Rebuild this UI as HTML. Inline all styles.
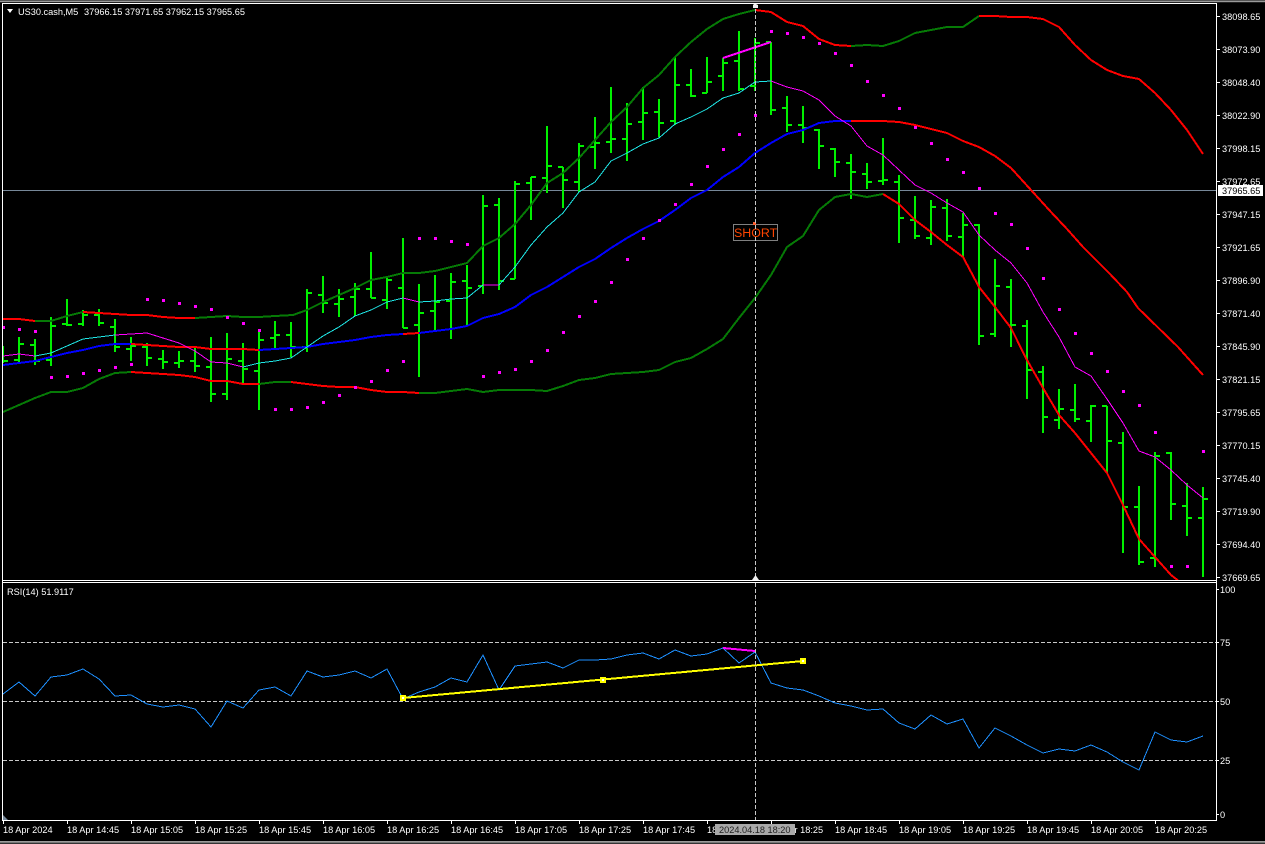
<!DOCTYPE html>
<html lang="en"><head><meta charset="utf-8"><title>US30.cash,M5</title>
<style>
html,body{margin:0;padding:0;background:#000;width:1265px;height:844px;overflow:hidden}
svg{display:block}
text{font-family:"Liberation Sans",sans-serif;font-size:9.2px;fill:#fff}
.l{fill:none;stroke-width:2;shape-rendering:crispEdges;stroke-linejoin:round}
.t{fill:none;stroke-width:1;shape-rendering:crispEdges}
.g{stroke:#067a06}.r{stroke:#f00}.b{stroke:#00f}.c{stroke:#1fe6e6}.m{stroke:#f0f}
.c1{shape-rendering:crispEdges}
</style></head><body>
<svg width="1265" height="844" viewBox="0 0 1265 844" xmlns="http://www.w3.org/2000/svg">
<rect width="1265" height="844" fill="#000"/>
<g class="c1">
<rect x="0" y="0" width="1265" height="1" fill="#555"/>
<rect x="0" y="1" width="1265" height="1" fill="#9a9a9a"/>
<rect x="0" y="2" width="1265" height="1" fill="#222"/>
<rect x="0" y="841" width="1265" height="1" fill="#9a9a9a"/>
<rect x="0" y="842" width="1265" height="1" fill="#777"/>
<rect x="0" y="843" width="1265" height="1" fill="#333"/>
</g>

<clipPath id="mc"><rect x="3" y="4" width="1213" height="576"/></clipPath>
<g clip-path="url(#mc)">
<line x1="3" y1="190.5" x2="1216" y2="190.5" stroke="#778899" class="c1"/>
<path fill="none" stroke="#00f000" stroke-width="2" class="c1" d="
M3 346V363M3 361H8
M19 337V362M14 360H19M19 344H24
M35 339V365M30 345H35M35 361H40
M51 317V366M46 360H51M51 326H56
M67 299V326M62 324H67M67 325H72
M83 310V326M78 324H83M83 315H88
M99 309V326M94 315H99M99 323H104
M115 319V352M110 327H115M115 347H120
M131 337V361M126 349H131M131 346H136
M147 343V366M142 347H147M147 358H152
M163 350V369M158 359H163M163 362H168
M179 351V368M174 363H179M179 361H184
M195 348V372M190 361H195M195 366H200
M211 337V402M206 367H211M211 394H216
M227 333V400M222 394H227M227 359H232
M243 343V383M238 361H243M243 369H248
M259 332V410M254 371H259M259 340H264
M275 321V349M270 338H275M275 335H280
M291 322V357M286 335H291M291 347H296
M307 289V352M302 347H307M307 293H312
M323 276V313M318 295H323M323 303H328
M339 289V317M334 304H339M339 299H344
M355 283V316M350 297H355M355 289H360
M371 252V298M366 289H371M371 298H376
M387 278V309M382 300H387M387 280H392
M403 238V328M398 288H403M403 328H408
M419 284V377M414 325H419M419 313H424
M435 275V331M430 311H435M435 302H440
M451 273V339M446 301H451M451 282H456
M467 265V325M462 281H467M467 288H472
M483 195V294M478 286H483M483 206H488
M499 198V290M494 205H499M499 281H504
M515 181V279M510 279H515M515 184H520
M531 177V220M526 183H531M531 177H536
M547 126V193M542 178H547M547 166H552
M563 167V208M558 167H563M563 180H568
M579 143V192M574 182H579M579 146H584
M595 117V169M590 147H595M595 143H600
M611 87V153M606 142H611M611 139H616
M627 103V161M622 139H627M627 124H632
M643 87V140M638 122H643M643 113H648
M659 99V137M654 112H659M659 123H664
M675 57V125M670 121H675M675 85H680
M691 69V97M686 85H691M691 96H696
M707 57V93M702 93H707M707 82H712
M723 58V91M718 76H723M723 63H728
M739 31V91M734 61H739M739 89H744
M755 38V91M750 86H755M755 43H760
M771 42V115M766 42H771M771 110H776
M787 96V132M782 108H787M787 125H792
M803 106V143M798 125H803M803 128H808
M819 129V169M814 130H819M819 146H824
M835 148V177M830 149H835M835 162H840
M851 154V199M846 163H851M851 172H856
M867 163V189M862 174H867M867 182H872
M883 138V185M878 181H883M883 180H888
M899 175V243M894 182H899M899 218H904
M915 196V239M910 220H915M915 236H920
M931 200V245M926 238H931M931 207H936
M947 199V241M942 208H947M947 236H952
M963 213V257M958 237H963M963 225H968
M979 224V345M974 225H979M979 336H984
M995 259V337M990 334H995M995 286H1000
M1011 279V347M1006 287H1011M1011 325H1016
M1027 320V399M1022 326H1027M1027 370H1032
M1043 366V433M1038 372H1043M1043 417H1048
M1059 389V429M1054 420H1059M1059 409H1064
M1075 384V422M1070 410H1075M1075 419H1080
M1091 405V442M1086 421H1091M1091 406H1096
M1107 406V473M1102 406H1107M1107 441H1112
M1123 432V553M1118 443H1123M1123 507H1128
M1139 486V565M1134 507H1139M1139 562H1144
M1155 452V567M1150 558H1155M1155 456H1160
M1171 452V520M1166 453H1171M1171 504H1176
M1187 483V536M1182 506H1187M1187 518H1192
M1203 487V577M1198 518H1203M1203 499H1208"/>

<polyline class="l r" points="3,319 19,319 35,321"/>
<polyline class="l g" points="35,321 51,321 67,316 83,312"/>
<polyline class="l r" points="83,312 99,313 115,314 131,315 147,315 163,317 179,318 195,318"/>
<polyline class="l g" points="195,318 211,317 227,316 243,317 259,317 275,316 293,315 307,310 323,302 339,295 355,288 371,280 387,277 403,273 419,273 435,271 451,267 467,263 483,246 499,238 515,224 531,205 547,183 563,173 579,158 595,140 611,122 627,107 643,88 659,75 675,57 691,42 707,29 723,19 739,14 755,10"/>
<polyline class="l r" points="755,10 771,12 787,22 803,26 819,39 835,45 851,46"/>
<polyline class="l g" points="851,46 867,45 883,46 899,41 915,33 931,30 947,27 963,27 979,16"/>
<polyline class="l r" points="979,16 995,16 1011,17 1027,17 1043,19 1059,27 1075,45 1091,60 1107,70 1123,76 1139,79 1155,93 1171,110 1187,130 1203,154"/>

<polyline class="l g" points="3,412 19,405 35,398 51,392 67,392 83,388 99,379 115,373 131,372"/>
<polyline class="l r" points="131,372 147,373 163,374 179,375 195,377 211,381 227,381 243,384 259,384"/>
<polyline class="l g" points="259,384 275,382 291,382"/>
<polyline class="l r" points="291,382 307,384 323,386 339,387 355,387 371,390 387,392 403,392 419,393"/>
<polyline class="l g" points="419,393 435,393 451,391 467,389 483,392 499,390 515,390 531,390 547,391 563,386 579,380 595,378 611,374 627,373 643,372 659,370 675,362 691,358 707,349 723,339 739,318 755,298 771,275 787,247 803,236 819,210 835,197 851,194 867,197 883,194"/>
<polyline class="l r" points="883,194 899,204 915,220 931,232 947,245 963,257 979,287 995,307 1011,328 1027,360 1043,388 1059,415 1075,433 1091,453 1107,473 1123,505 1139,539 1155,557 1171,575 1180,582"/>

<polyline class="l b" points="3,365 19,363 35,361 51,357 67,353 83,350 99,346 115,344 131,344"/>
<polyline class="l r" points="131,344 147,345 163,346 179,347 195,347 211,349 227,349 243,349 259,350"/>
<polyline class="l b" points="259,350 275,349 291,348 307,347 323,344 339,342 355,340 371,337 387,335 403,334"/>
<polyline class="l r" points="403,334 419,333"/>
<polyline class="l b" points="419,333 435,331 451,329 467,326 483,318 499,314 515,307 531,295 547,287 563,277 579,267 595,259 611,248 627,238 643,229 659,221 675,210 691,198 707,190 723,177 739,167 755,153 771,143 787,134 803,130 819,123 835,121 851,121"/>
<polyline class="l r" points="851,121 867,121 883,121 899,122 915,125 931,129 947,133 963,141 979,147 995,156 1011,168 1031,190 1051,212 1067,229 1083,247 1110,274 1127,292 1138,308 1178,347 1203,375"/>

<polyline class="t m" points="3,356 19,354 35,356"/>
<polyline class="t c" points="35,356 51,353 67,346 83,339 99,337 115,335"/>
<polyline class="t m" points="115,335 131,334 147,333 163,338 179,343 195,351 211,362 227,363 243,367"/>
<polyline class="t c" points="243,367 259,363 275,361 291,358 307,347 323,336 339,327 355,316 371,310 387,302 403,298"/>
<polyline class="t m" points="403,298 419,302"/>
<polyline class="t c" points="419,302 435,301 451,299 467,298 483,285"/>
<polyline class="t m" points="483,285 499,285"/>
<polyline class="t c" points="499,285 515,267 531,245 547,227 563,213 579,192 595,182 611,161 627,153 643,144 659,138 675,124 691,117 707,109 723,98 739,93 755,82 771,81"/>
<polyline class="t m" points="771,81 787,87 803,91 819,100 835,116 851,126 867,146 883,155 899,170 915,185 931,193 947,203 963,212 979,235 995,250 1011,263 1027,283 1043,312 1059,337 1075,367 1091,376 1107,399 1123,423 1139,451 1155,457 1171,470 1187,485 1203,498"/>

<line x1="723" y1="58" x2="771" y2="42" stroke="#f0f" stroke-width="2" class="c1"/>

<path fill="#f0f" class="c1" d="M2 326h3v3h-3zM18 328h3v3h-3zM34 330h3v3h-3zM50 376h3v3h-3zM66 375h3v3h-3zM82 372h3v3h-3zM98 369h3v3h-3zM114 366h3v3h-3zM130 363h3v3h-3zM146 298h3v3h-3zM162 299h3v3h-3zM178 302h3v3h-3zM194 305h3v3h-3zM210 308h3v3h-3zM226 316h3v3h-3zM242 322h3v3h-3zM258 329h3v3h-3zM274 408h3v3h-3zM290 408h3v3h-3zM306 406h3v3h-3zM322 401h3v3h-3zM338 394h3v3h-3zM354 386h3v3h-3zM370 380h3v3h-3zM386 369h3v3h-3zM402 360h3v3h-3zM418 237h3v3h-3zM434 237h3v3h-3zM450 240h3v3h-3zM466 243h3v3h-3zM482 375h3v3h-3zM498 371h3v3h-3zM514 368h3v3h-3zM530 360h3v3h-3zM546 349h3v3h-3zM562 331h3v3h-3zM578 315h3v3h-3zM594 300h3v3h-3zM610 281h3v3h-3zM626 258h3v3h-3zM642 237h3v3h-3zM658 219h3v3h-3zM674 203h3v3h-3zM690 183h3v3h-3zM706 165h3v3h-3zM722 148h3v3h-3zM738 133h3v3h-3zM754 114h3v3h-3zM770 30h3v3h-3zM786 32h3v3h-3zM802 36h3v3h-3zM818 42h3v3h-3zM834 52h3v3h-3zM850 64h3v3h-3zM866 80h3v3h-3zM882 94h3v3h-3zM898 107h3v3h-3zM914 126h3v3h-3zM930 142h3v3h-3zM946 158h3v3h-3zM962 171h3v3h-3zM978 187h3v3h-3zM994 212h3v3h-3zM1010 223h3v3h-3zM1026 247h3v3h-3zM1042 277h3v3h-3zM1058 308h3v3h-3zM1074 332h3v3h-3zM1090 352h3v3h-3zM1106 370h3v3h-3zM1122 390h3v3h-3zM1138 404h3v3h-3zM1154 431h3v3h-3zM1170 565h3v3h-3zM1186 565h3v3h-3zM1202 450h3v3h-3z"/>

<rect x="733.5" y="224.5" width="44" height="16" fill="none" stroke="#808080" class="c1"/>
<text x="734" y="237" style="font-size:12.4px;fill:#ff4500">SHORT</text>
<rect x="753" y="222" width="3" height="3" fill="#ff6030" class="c1"/>
</g>

<text x="18" y="15">US30.cash,M5</text>
<text x="84" y="15">37966.15 37971.65 37962.15 37965.65</text>
<polygon points="7,9 13,9 10,13" fill="#fff"/>

<clipPath id="sc"><rect x="3" y="583" width="1213" height="237"/></clipPath>
<g clip-path="url(#sc)">
<g stroke="#c8c8c8" stroke-dasharray="4 2" class="c1">
<line x1="3" y1="642.5" x2="1216" y2="642.5"/>
<line x1="3" y1="701.5" x2="1216" y2="701.5"/>
<line x1="3" y1="760.5" x2="1216" y2="760.5"/>
</g>
<polyline class="t" stroke="#1e90ff" points="3,694 19,682 35,696 51,677 67,675 83,669 99,679 115,696 131,695 147,704 163,707 179,705 195,709 211,727 227,701 243,708 259,690 275,687 291,696 307,671 323,677 339,675 355,671 371,678 387,669 403,699 419,692 435,687 451,678 467,682 483,655 499,690 515,666 531,664 547,662 563,668 579,660 595,660 611,659 627,655 643,653 659,659 675,650 691,656 707,654 723,648 739,663 755,652 771,683 787,688 803,690 819,696 835,703 851,706 867,710 883,709 899,723 915,729 931,715 947,724 963,719 979,748 995,728 1011,736 1027,745 1043,753 1059,749 1075,751 1091,745 1107,752 1123,762 1139,770 1155,732 1171,740 1187,742 1203,736"/>
<line x1="403" y1="698" x2="803" y2="661" stroke="#ff0" stroke-width="2" class="c1"/>
<line x1="723" y1="648" x2="755" y2="651" stroke="#f0f" stroke-width="2" class="c1"/>
<g fill="#ff0" class="c1">
<rect x="400" y="695" width="6" height="6"/>
<rect x="600" y="677" width="6" height="6"/>
<rect x="800" y="658" width="6" height="6"/>
</g>
<g fill="#fff" class="c1">
<rect x="402" y="697" width="2" height="2"/>
<rect x="602" y="679" width="2" height="2"/>
<rect x="802" y="660" width="2" height="2"/>
</g>
<polygon points="3,815 3,820 8,820" fill="#778899"/>
</g>
<text x="7" y="595">RSI(14) 51.9117</text>

<line x1="755.5" y1="9" x2="755.5" y2="578" stroke="#c8c8c8" stroke-dasharray="4 2" class="c1"/>
<line x1="755.5" y1="583" x2="755.5" y2="820" stroke="#c8c8c8" stroke-dasharray="4 2" class="c1"/>
<polygon points="753,8 758,8 758,5 756,4 754,4 753,5" fill="#eee"/>
<polygon points="752,580 759,580 755.5,575" fill="#eee"/>

<g fill="#fff" class="c1">
<rect x="2" y="3" width="1215" height="1"/>
<rect x="2" y="3" width="1" height="818"/>
<rect x="1216" y="3" width="1" height="818"/>
<rect x="2" y="580" width="1215" height="1"/>
<rect x="2" y="582" width="1215" height="1"/>
<rect x="2" y="820" width="1215" height="1"/>
</g>

<path stroke="#fff" fill="none" class="c1" d="M1217 16.5h3M1217 49.5h3M1217 82.5h3M1217 115.5h3M1217 148.5h3M1217 181.5h3M1217 214.5h3M1217 247.5h3M1217 280.5h3M1217 313.5h3M1217 346.5h3M1217 379.5h3M1217 412.5h3M1217 445.5h3M1217 478.5h3M1217 511.5h3M1217 544.5h3M1217 577.5h3M1217 589.5h2M1217 642.5h2M1217 701.5h2M1217 760.5h2M1217 814.5h2M3.5 821v3M67.5 821v3M131.5 821v3M195.5 821v3M259.5 821v3M323.5 821v3M387.5 821v3M451.5 821v3M515.5 821v3M579.5 821v3M643.5 821v3M707.5 821v3M771.5 821v3M835.5 821v3M899.5 821v3M963.5 821v3M1027.5 821v3M1091.5 821v3M1155.5 821v3"/>

<text x="1222" y="20">38098.65</text>
<text x="1222" y="53">38073.90</text>
<text x="1222" y="86">38048.40</text>
<text x="1222" y="119">38022.90</text>
<text x="1222" y="152">37998.15</text>
<text x="1222" y="185">37972.65</text>
<rect x="1218" y="185" width="45" height="11" fill="#fff" class="c1"/>
<text x="1222" y="194" style="fill:#000">37965.65</text>
<text x="1222" y="218">37947.15</text>
<text x="1222" y="251">37921.65</text>
<text x="1222" y="284">37896.90</text>
<text x="1222" y="317">37871.40</text>
<text x="1222" y="350">37845.90</text>
<text x="1222" y="383">37821.15</text>
<text x="1222" y="416">37795.65</text>
<text x="1222" y="449">37770.15</text>
<text x="1222" y="482">37745.40</text>
<text x="1222" y="515">37719.90</text>
<text x="1222" y="548">37694.40</text>
<text x="1222" y="581">37669.65</text>
<text x="1220" y="593">100</text>
<text x="1220" y="646">75</text>
<text x="1220" y="705">50</text>
<text x="1220" y="764">25</text>
<text x="1220" y="818">0</text>

<text x="3" y="833">18 Apr 2024</text>
<text x="67" y="833">18 Apr 14:45</text>
<text x="131" y="833">18 Apr 15:05</text>
<text x="195" y="833">18 Apr 15:25</text>
<text x="259" y="833">18 Apr 15:45</text>
<text x="323" y="833">18 Apr 16:05</text>
<text x="387" y="833">18 Apr 16:25</text>
<text x="451" y="833">18 Apr 16:45</text>
<text x="515" y="833">18 Apr 17:05</text>
<text x="579" y="833">18 Apr 17:25</text>
<text x="643" y="833">18 Apr 17:45</text>
<text x="707" y="833">18 Apr 18:05</text>
<text x="771" y="833">18 Apr 18:25</text>
<text x="835" y="833">18 Apr 18:45</text>
<text x="899" y="833">18 Apr 19:05</text>
<text x="963" y="833">18 Apr 19:25</text>
<text x="1027" y="833">18 Apr 19:45</text>
<text x="1091" y="833">18 Apr 20:05</text>
<text x="1155" y="833">18 Apr 20:25</text>
<rect x="715" y="824" width="80" height="11" fill="#a9a9a9" class="c1"/>
<text x="719" y="833" style="fill:#222">2024.04.18 18:20</text>
</svg>
</body></html>
